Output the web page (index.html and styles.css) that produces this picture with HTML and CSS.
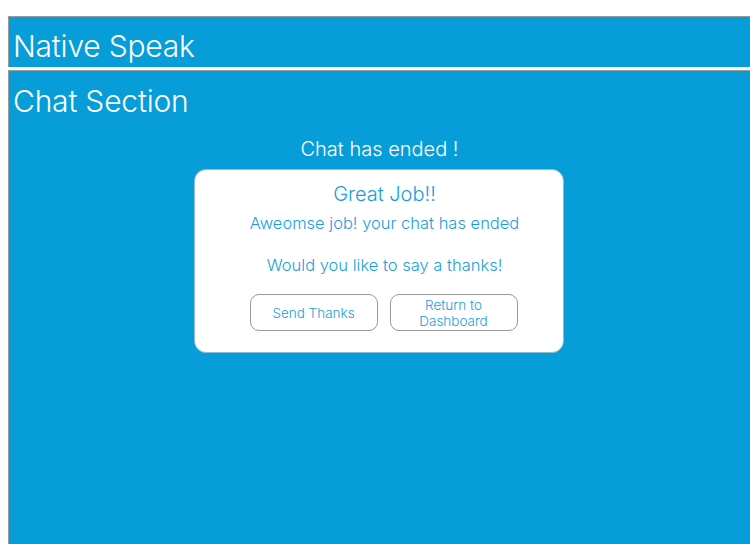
FILE: index.html
```html
<!DOCTYPE html>
<html>
<head>
<meta charset="utf-8">
<link rel="stylesheet" href="styles.css">
</head>
<body>
<div class="page">
  <header class="topbar">
    <h1 class="brand">Native Speak</h1>
  </header>
  <section class="chat">
    <h2 class="chat-title">Chat Section</h2>
    <p class="status">Chat has ended !</p>
    <div class="card">
      <h3 class="card-title">Great Job!!</h3>
      <p class="card-text">Aweomse job! your chat has ended</p>
      <p class="card-text ask">Would you like to say a thanks!</p>
      <div class="actions">
        <button class="btn">Send Thanks</button>
        <button class="btn">Return to<br>Dashboard</button>
      </div>
    </div>
  </section>
</div>
</body>
</html>
```
FILE: styles.css
```css
html, body {
  margin: 0;
  padding: 0;
  height: 100%;
  background: #fff;
  overflow: hidden;
}
body {
  font-family: "Helvetica Neue", Inter, "Open Sans", sans-serif;
  font-weight: 300;
}
.page {
  padding: 16px 0 0 8px;
  height: 100%;
  box-sizing: border-box;
  display: flex;
  flex-direction: column;
}
.topbar {
  background: #069dd9;
  border-top: 1px solid #9a9a9a;
  border-left: 1px solid #9a9a9a;
  height: 51px;
  box-sizing: border-box;
  display: flex;
  align-items: flex-start;
  padding: 10px 0 0 4px;
}
.brand {
  margin: 0;
  color: #fff;
  font-size: 30px;
  font-weight: 300;
  line-height: 38px;
  letter-spacing: -0.2px;
}
.chat {
  margin-top: 3px;
  flex: 1;
  background: #069dd9;
  border-top: 1px solid #9a9a9a;
  border-left: 1px solid #9a9a9a;
  display: flex;
  flex-direction: column;
  align-items: center;
}
.chat-title {
  align-self: flex-start;
  margin: 12px 0 0 4px;
  color: #fff;
  font-size: 30px;
  font-weight: 300;
  line-height: 36px;
  letter-spacing: -0.2px;
}
.status {
  margin: 17px 0 0 0;
  color: #fff;
  font-size: 20px;
  line-height: 26px;
}
.card {
  margin-top: 7px;
  margin-left: -2px;
  width: 370px;
  height: 184px;
  box-sizing: border-box;
  background: #fff;
  border: 1px solid #8fb9cc;
  border-radius: 12px;
  display: flex;
  flex-direction: column;
  align-items: center;
  padding: 11px 0 0 12px;
}
.card-title {
  margin: 0;
  color: #1a9edb;
  font-size: 20px;
  font-weight: 300;
  line-height: 26px;
}
.card-text {
  margin: 5px 0 0 0;
  color: #1a9edb;
  font-size: 16.5px;
  line-height: 22px;
}
.card-text.ask {
  margin-top: 20px;
}
.actions {
  margin-top: 18px;
  margin-left: -2px;
  display: flex;
  gap: 12px;
}
.btn {
  width: 128px;
  height: 37px;
  background: #fff;
  border: 1px solid #999;
  border-radius: 9px;
  color: #1a9edb;
  font-family: inherit;
  font-weight: 300;
  font-size: 13.5px;
  line-height: 16px;
  padding: 0;
}
```
